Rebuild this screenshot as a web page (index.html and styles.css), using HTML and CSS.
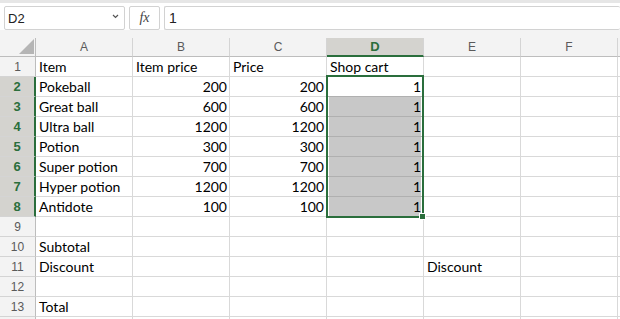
FILE: index.html
```html
<!DOCTYPE html>
<html lang="en">
<head>
    <meta charset="UTF-8">
    <meta name="viewport" content="width=device-width, initial-scale=1.0">
    <title>Shop cart</title>
    <link rel="stylesheet" href="styles.css">
</head>
<body>
    <div class="toolbar">
        <div class="name-box">
            <span>D2</span>
            <svg class="chev" width="7" height="5" viewBox="0 0 7 5"><polyline points="1,1 3.5,3.5 6,1" fill="none" stroke="#555" stroke-width="1.2"/></svg>
        </div>
        <div class="fx-box"><i>fx</i></div>
        <div class="formula">1</div>
    </div>
    <div class="band"></div>

    <div class="grid">
        <!-- column headers -->
        <div class="corner"><span class="tri"></span></div>
        <div class="ch">A</div><div class="ch">B</div><div class="ch">C</div>
        <div class="ch active">D</div><div class="ch">E</div><div class="ch">F</div><div class="ch"></div>

        <div class="rh">1</div><div class="c">Item</div><div class="c">Item price</div><div class="c">Price</div><div class="c">Shop cart</div><div class="c"></div><div class="c"></div><div class="c"></div>
        <div class="rh on">2</div><div class="c">Pokeball</div><div class="c n">200</div><div class="c n">200</div>
        <div class="c n cur">1<div class="selection"></div></div><div class="c"></div><div class="c"></div><div class="c"></div>
        <div class="rh on">3</div><div class="c">Great ball</div><div class="c n">600</div><div class="c n">600</div><div class="c n sel">1</div><div class="c"></div><div class="c"></div><div class="c"></div>
        <div class="rh on">4</div><div class="c">Ultra ball</div><div class="c n">1200</div><div class="c n">1200</div><div class="c n sel">1</div><div class="c"></div><div class="c"></div><div class="c"></div>
        <div class="rh on">5</div><div class="c">Potion</div><div class="c n">300</div><div class="c n">300</div><div class="c n sel">1</div><div class="c"></div><div class="c"></div><div class="c"></div>
        <div class="rh on">6</div><div class="c">Super potion</div><div class="c n">700</div><div class="c n">700</div><div class="c n sel">1</div><div class="c"></div><div class="c"></div><div class="c"></div>
        <div class="rh on">7</div><div class="c">Hyper potion</div><div class="c n">1200</div><div class="c n">1200</div><div class="c n sel">1</div><div class="c"></div><div class="c"></div><div class="c"></div>
        <div class="rh on">8</div><div class="c">Antidote</div><div class="c n">100</div><div class="c n">100</div><div class="c n sel">1</div><div class="c"></div><div class="c"></div><div class="c"></div>
        <div class="rh">9</div><div class="c"></div><div class="c"></div><div class="c"></div><div class="c"></div><div class="c"></div><div class="c"></div><div class="c"></div>
        <div class="rh">10</div><div class="c">Subtotal</div><div class="c"></div><div class="c"></div><div class="c"></div><div class="c"></div><div class="c"></div><div class="c"></div>
        <div class="rh">11</div><div class="c">Discount</div><div class="c"></div><div class="c"></div><div class="c"></div><div class="c">Discount</div><div class="c"></div><div class="c"></div>
        <div class="rh">12</div><div class="c"></div><div class="c"></div><div class="c"></div><div class="c"></div><div class="c"></div><div class="c"></div><div class="c"></div>
        <div class="rh">13</div><div class="c">Total</div><div class="c"></div><div class="c"></div><div class="c"></div><div class="c"></div><div class="c"></div><div class="c"></div>
        <div class="rh"></div><div class="c"></div><div class="c"></div><div class="c"></div><div class="c"></div><div class="c"></div><div class="c"></div><div class="c"></div>
    </div>
</body>
</html>
```

FILE: styles.css
```css
html, body {
    height: 319px;
    overflow: hidden;
}
body {
    margin: 0;
    background: #fff;
    font-family: "Lato", "Open Sans", sans-serif;
}

/* name box + formula bar */
.toolbar {
    display: flex;
    gap: 4px;
    height: 30px;
    box-sizing: border-box;
    border-top: 3px solid #e6e6e6;
    padding: 3px 0 0 4px;
    background: #fff;
}
.toolbar > div {
    height: 24px;
    box-sizing: border-box;
    border: 1px solid #d2d2d2;
    border-radius: 2px;
    display: flex;
    align-items: center;
    font-family: "Liberation Sans", Arial, sans-serif;
    color: #222;
}
.name-box {
    width: 121px;
    justify-content: space-between;
    padding: 0 5px 0 3px;
    font-size: 13px;
}
.chev {
    margin-top: -4px;
}
.fx-box {
    width: 31px;
    justify-content: center;
}
.fx-box i {
    font-family: "Liberation Serif", "Times New Roman", serif;
    font-size: 14px;
    color: #444;
}
.formula {
    flex: 1;
    padding-left: 4px;
    font-size: 14px;
    border-right: none !important;
}

.band {
    height: 8px;
    background: #f3f3f3;
}

/* sheet */
.grid {
    display: grid;
    grid-template-columns: 36px repeat(6, 97px) 3px;
    grid-template-rows: 19px;
    grid-auto-rows: 20px;
    height: 281px;
    overflow: hidden;
}
.grid > div {
    box-sizing: border-box;
    border-right: 1px solid #d9d9d9;
    border-bottom: 1px solid #d9d9d9;
}
.grid > .corner {
    background: #f3f3f3;
    border-bottom-color: #bdbdbd;
    border-right-color: #bdbdbd;
    display: flex;
    align-items: flex-end;
    justify-content: flex-end;
    padding: 0 1px 2px 0;
}
.tri {
    width: 15px;
    height: 15px;
    background: #b5b5b5;
    clip-path: polygon(100% 0, 100% 100%, 0 100%);
}
.grid > .ch {
    background: #f3f3f3;
    border-right-color: #d4d4d4;
    border-bottom-color: #bdbdbd;
    display: flex;
    align-items: center;
    justify-content: center;
    font-family: "Liberation Sans", Arial, sans-serif;
    font-size: 12px;
    color: #5a5a5a;
}
.grid > .ch.active {
    background: #d4d3cf;
    border-bottom: 2px solid #2a6e3c;
    color: #2a6e3c;
    font-weight: bold;
    font-size: 13px;
}
.grid > .rh {
    background: #f3f3f3;
    border-right-color: #bdbdbd;
    border-bottom-color: #d4d4d4;
    display: flex;
    align-items: center;
    justify-content: center;
    font-family: "Liberation Sans", Arial, sans-serif;
    font-size: 12px;
    color: #5a5a5a;
}
.grid > .rh.on {
    background: #d4d3cf;
    border-right: 2px solid #2a6e3c;
    color: #2a6e3c;
    font-weight: bold;
    font-size: 13px;
}
.c {
    display: flex;
    align-items: center;
    padding: 0 2px 0 3px;
    font-size: 14px;
    color: #000;
    white-space: nowrap;
}
.n {
    justify-content: flex-end;
}
.grid > .sel {
    background: #c8c8c8;
    border-bottom-color: #b0b0b0;
    box-shadow: inset 2px 0 #fff, inset -2px 0 #fff;
}
.grid > .cur {
    position: relative;
    border-bottom-color: #b0b0b0;
}

/* selected range D2:D8, drawn over the cells */
.selection {
    position: absolute;
    top: -2px;
    left: -1px;
    width: 98px;
    height: 143px;
    box-sizing: border-box;
    border: 2px solid #2a6e3c;
    pointer-events: none;
    z-index: 2;
}
.selection::after {
    content: "";
    position: absolute;
    right: -4px;
    bottom: -4px;
    width: 5px;
    height: 5px;
    background: #2a6e3c;
    border: 1px solid #fff;
}
```
